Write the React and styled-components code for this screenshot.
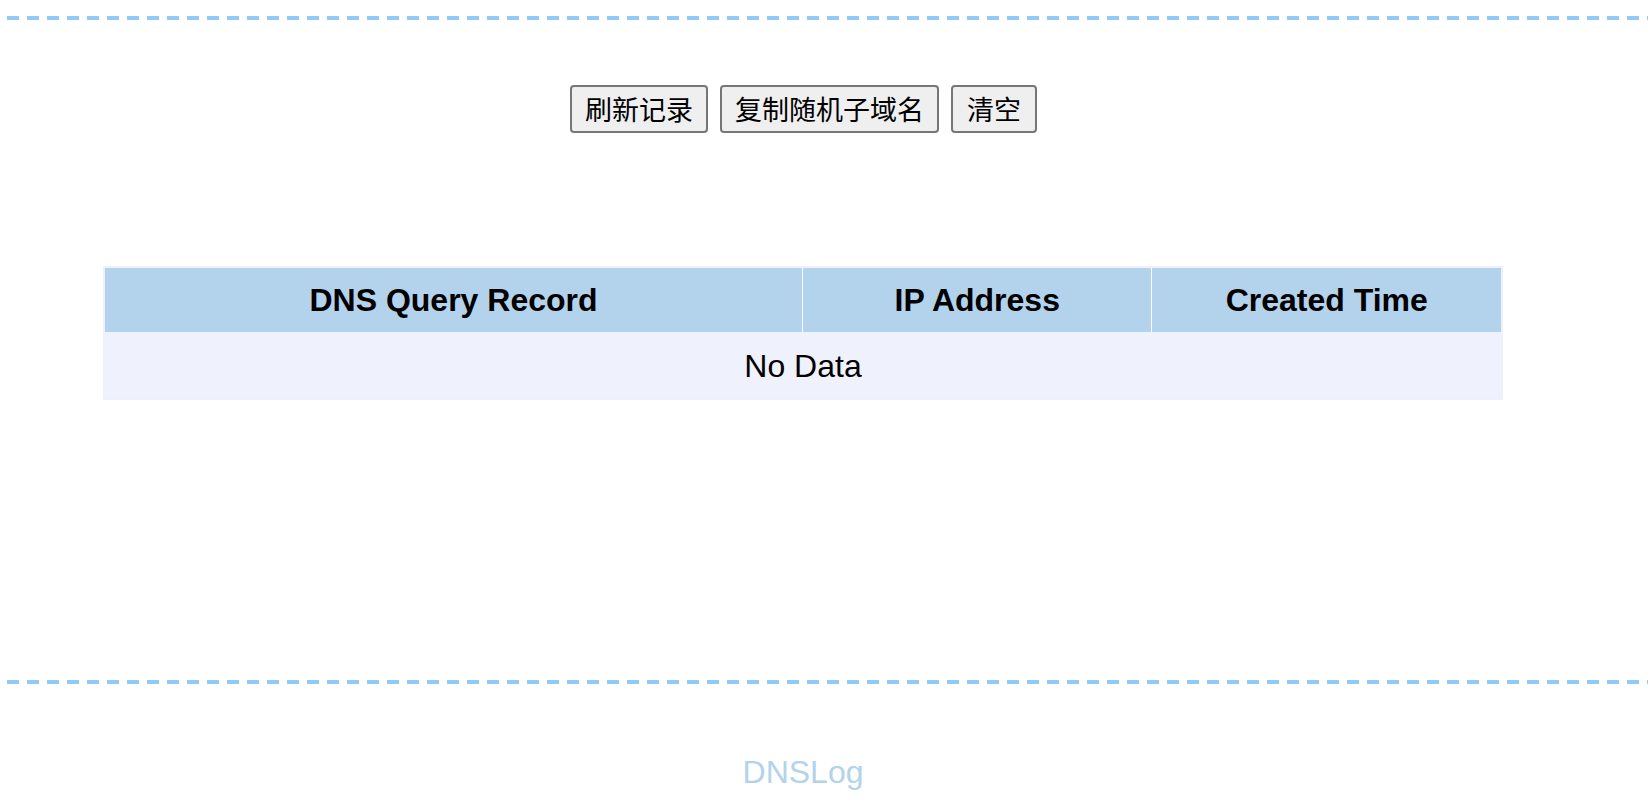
import React from 'react';
import styled, { createGlobalStyle } from 'styled-components';

const GlobalStyle = createGlobalStyle`
	body {
		margin: 0;
		background: #fff;
		font-family: 'Liberation Sans', 'Noto Sans CJK SC', sans-serif;
		color: #000;
	}
`;

const columns = [
	{ key: 'subdomain', label: 'DNS Query Record', width: '50%' },
	{ key: 'ip', label: 'IP Address', width: '25%' },
	{ key: 'created', label: 'Created Time', width: '25%' },
];

const App = () => {
	const records = [];

	return (
		<StyledPage>
			<GlobalStyle />
			<DashedRule />
			<Main>
				<Toolbar>
					<ActionButton>刷新记录</ActionButton>
					<ActionButton>复制随机子域名</ActionButton>
					<ActionButton $wide>清空</ActionButton>
				</Toolbar>
				<RecordTable>
					<thead>
						<tr>
							{columns.map((col) => (
								<HeadCell key={col.key} style={{ width: col.width }}>
									{col.label}
								</HeadCell>
							))}
						</tr>
					</thead>
					<tbody>
						{records.length === 0 && (
							<tr>
								<EmptyCell colSpan={columns.length}>No Data</EmptyCell>
							</tr>
						)}
					</tbody>
				</RecordTable>
			</Main>
			<DashedRule $gap={280} />
			<Footer>DNSLog</Footer>
		</StyledPage>
	);
};

const StyledPage = styled.div`
	padding-top: 16px;
	min-height: 100vh;
	box-sizing: border-box;
`;

const DashedRule = styled.div`
	height: 4px;
	margin-left: 7px;
	margin-top: ${({ $gap }) => ($gap ? `${$gap}px` : '0')};
	background: repeating-linear-gradient(
		90deg,
		#90caf9 0 12px,
		transparent 12px 20px
	);
`;

const Main = styled.main`
	width: 1590px;
	margin-left: 8px;
	display: flex;
	flex-direction: column;
	align-items: center;
`;

const Toolbar = styled.div`
	margin-top: 65px;
	display: flex;
	gap: 12px;
	padding-left: 1px;
`;

const ActionButton = styled.button`
	height: 48px;
	padding: 2px ${({ $wide }) => ($wide ? '14px' : '13px')};
	font-family: 'Noto Sans CJK SC', sans-serif;
	font-size: 27px;
	line-height: 40px;
	color: #000;
	background-color: #efefef;
	border: 2px solid #767676;
	border-radius: 4px;
	cursor: pointer;
`;

const RecordTable = styled.table`
	margin-top: 133px;
	width: 1400px;
	border-collapse: separate;
	border-spacing: 0;
	border: 2px solid #eef1fb;
	background-color: #eff2fc;
	table-layout: fixed;
`;

const HeadCell = styled.th`
	height: 63px;
	padding: 1px 0 0;
	background-color: #b3d2ec;
	font-size: 32px;
	font-weight: bold;
	text-align: center;
	vertical-align: middle;
	& + & {
		border-left: 1px solid #fff;
	}
`;

const EmptyCell = styled.td`
	height: 63px;
	padding: 3px 0 0;
	font-size: 32px;
	text-align: center;
	vertical-align: middle;
`;

const Footer = styled.footer`
	width: 1590px;
	margin: 70px 0 0 8px;
	text-align: center;
	font-size: 32px;
	line-height: 37px;
	color: #b3d2ec;
`;

export default App;
